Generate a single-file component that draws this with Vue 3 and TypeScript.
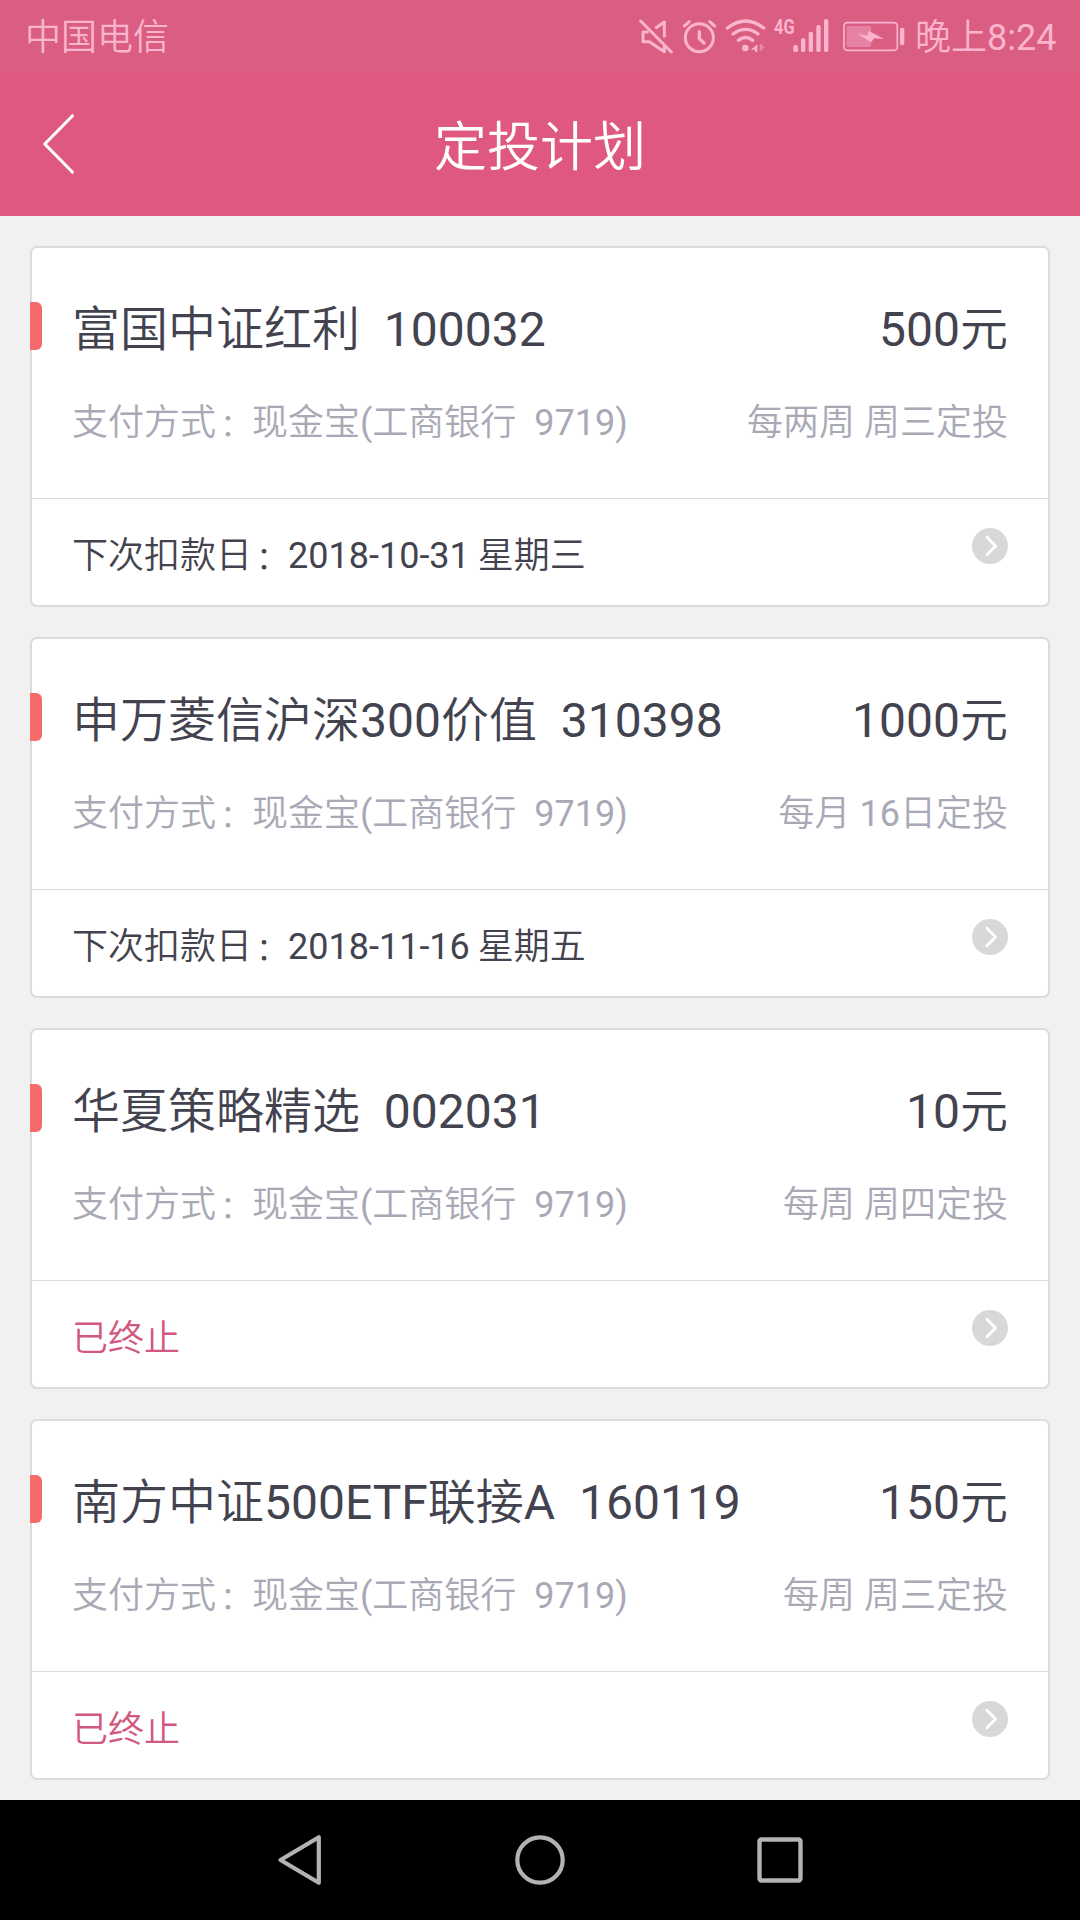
<script setup lang="ts">
interface Plan {
  name: string
  code: string
  amount: string
  cycle: string
  next?: string
}

const plans: Plan[] = [
  { name: '富国中证红利', code: '100032', amount: '500元', cycle: '每两周 周三定投', next: '2018-10-31 星期三' },
  { name: '申万菱信沪深300价值', code: '310398', amount: '1000元', cycle: '每月 16日定投', next: '2018-11-16 星期五' },
  { name: '华夏策略精选', code: '002031', amount: '10元', cycle: '每周 周四定投' },
  { name: '南方中证500ETF联接A', code: '160119', amount: '150元', cycle: '每周 周三定投' },
]
</script>

<template>
  <div class="screen">
    <div class="status">
      <span class="carrier">中国电信</span>
      <div class="icons">
        <svg class="mute" width="36" height="72" viewBox="54 0 108 216" fill="none" stroke="#fab4cd" stroke-width="9" stroke-linejoin="round">
          <path d="M62 63L154 156" stroke-linecap="round" />
          <path d="M86 96H69V125H88L133 155V137" />
          <path d="M106 85L133 66V112" />
        </svg>
        <svg class="alarm" width="36" height="72" viewBox="186 0 108 216" fill="none" stroke="#fab4cd" stroke-width="9" stroke-linecap="round" stroke-linejoin="round">
          <circle cx="238" cy="113" r="42" />
          <path d="M238 95V116L252 129" stroke-width="10" />
          <path d="M193 78L208 65M269 65L284 78" />
        </svg>
        <svg class="wifi" width="42" height="72" viewBox="314 0 126 216" fill="none" stroke="#fab4cd" stroke-width="10" stroke-linecap="round">
          <path d="M321 84Q376 42 430 84" />
          <path d="M338 102Q376 74 413 102" />
          <path d="M354 121Q376 104 397 121" />
          <circle cx="375" cy="144" r="10" fill="#fab4cd" stroke="none" />
          <path d="M411 133V156H404V149H392Z" fill="#fab4cd" stroke="none" />
          <path d="M418 133V156L435 140H426V133Z" fill="#e98aaa" stroke="none" />
        </svg>
        <span class="net">4G</span>
        <svg class="signal" width="36" height="72" viewBox="518 0 108 216" fill="#fab4cd">
          <rect x="519" y="135" width="14" height="21" rx="5" />
          <rect x="542" y="115" width="13" height="41" rx="5" />
          <rect x="565" y="95" width="13" height="61" rx="5" />
          <rect x="588" y="75" width="13" height="81" rx="5" />
          <rect x="611" y="57" width="13" height="99" rx="5" />
        </svg>
        <svg class="battery" width="62" height="72" viewBox="669 0 186 216" fill="none">
          <rect x="672" y="68" width="160" height="83" rx="10" stroke="#fab4cd" stroke-width="5" />
          <rect x="680" y="78" width="73" height="63" rx="4" fill="#e683a4" />
          <path d="M713 102L742 107L746 92L792 117L762 115L754 127Z" fill="#fab4cd" />
          <rect x="840" y="83" width="13" height="53" rx="6" fill="#fab4cd" />
        </svg>
        <span class="time">晚上8:24</span>
      </div>
    </div>

    <header class="header">
      <svg class="back" width="36" height="66" viewBox="0 0 36 66" fill="none" stroke="#fff" stroke-width="3.2" stroke-linecap="round" stroke-linejoin="round">
        <path d="M32.3 5L4.8 33L32.3 61" />
      </svg>
      <h1 class="title">定投计划</h1>
    </header>

    <main class="list">
      <section v-for="plan in plans" :key="plan.code" class="card">
        <div class="info">
          <div class="row main">
            <i class="mark"></i>
            <span class="name">{{ plan.name }}&nbsp; {{ plan.code }}</span>
            <span class="amount">{{ plan.amount }}</span>
          </div>
          <div class="row sub">
            <span>支付方式<span class="colon">：</span>现金宝(工商银行&nbsp; 9719)</span>
            <span>{{ plan.cycle }}</span>
          </div>
        </div>
        <div class="foot">
          <span v-if="plan.next" class="next">下次扣款日<span class="colon">：</span>{{ plan.next }}</span>
          <span v-else class="ended">已终止</span>
          <svg class="go" width="36" height="36" viewBox="0 0 36 36" fill="none">
            <circle cx="18" cy="18" r="18" fill="#d8d8d8" />
            <path d="M15 9.2L23.6 18L15 26.8" stroke="#fff" stroke-width="2.8" stroke-linecap="round" stroke-linejoin="round" />
          </svg>
        </div>
      </section>
    </main>

    <nav class="nav">
      <svg width="52" height="56" viewBox="0 0 52 56" fill="none" stroke="#b3b3b3" stroke-width="4.2" stroke-linejoin="round">
        <path d="M6.5 28L44.8 5.2V50.8Z" />
      </svg>
      <svg width="52" height="56" viewBox="0 0 52 56" fill="none" stroke="#b3b3b3" stroke-width="4.2">
        <circle cx="26" cy="28" r="22.7" />
      </svg>
      <svg width="52" height="56" viewBox="0 0 52 56" fill="none" stroke="#b3b3b3" stroke-width="4.4">
        <rect x="5.5" y="7.5" width="41" height="41" rx="2" />
      </svg>
    </nav>
  </div>
</template>

<style>
body {
  margin: 0;
}
</style>

<style scoped>
.screen {
  width: 1080px;
  height: 1920px;
  display: flex;
  flex-direction: column;
  background: #f1f1f1;
  font-family: Roboto, 'Noto Sans CJK SC DemiLight', 'Noto Sans CJK SC', sans-serif;
  overflow: hidden;
}
.status {
  height: 72px;
  flex: none;
  display: flex;
  justify-content: space-between;
  padding: 0 23px 0 25px;
  background: #da5d82;
  color: #fab4cd;
  font-size: 36px;
  line-height: 77px;
  white-space: nowrap;
}
.icons {
  display: flex;
}
.icons svg {
  flex: none;
  display: block;
}
.alarm { margin-left: 8px; }
.wifi { margin-left: 7px; }
.net {
  width: 19px;
  margin-left: 7px;
  font-size: 21px;
  font-weight: 700;
  line-height: 54px;
  transform: scaleX(0.78);
  transform-origin: 0 50%;
}
.battery { margin-left: 14px; }
.time {
  width: 142px;
  margin-left: 10px;
}
.header {
  height: 144px;
  flex: none;
  display: grid;
  grid-template-columns: 120px 1fr 120px;
  align-items: center;
  background: #df5880;
}
.back {
  margin-left: 40px;
}
.title {
  margin: 8px 0 0;
  text-align: center;
  color: #fff;
  font-size: 53px;
  font-weight: 400;
  line-height: 80px;
}
.list {
  flex: 1;
  display: flex;
  flex-direction: column;
  gap: 30px;
  padding: 30px 30px 0;
}
.card {
  height: 361px;
  flex: none;
  box-sizing: border-box;
  border: 2px solid #dbdbdb;
  border-radius: 7px;
  background: #fff;
}
.info {
  height: 251px;
  box-sizing: border-box;
  padding: 46px 40px 0 0;
  border-bottom: 1px solid #dbdbdb;
}
.row {
  display: flex;
  justify-content: space-between;
  white-space: nowrap;
}
.main {
  height: 72px;
  line-height: 71px;
  font-size: 48px;
  color: #43434f;
}
.mark {
  width: 12px;
  height: 48px;
  margin: 8px 30px 0 -2px;
  border-radius: 0 6px 6px 0;
  background: #f56a6a;
}
.name {
  flex: 1;
}
.sub {
  margin-top: 30px;
  padding-left: 40px;
  height: 54px;
  line-height: 54px;
  font-size: 36px;
  color: #a9a9b6;
}
.colon {
  display: inline-block;
  padding-left: 4px;
  font-size: 32px;
  line-height: 1;
  transform: translateY(1px);
}
.foot {
  height: 106px;
  display: flex;
  justify-content: space-between;
  padding: 0 40px;
  font-size: 36px;
  line-height: 114px;
  color: #43434f;
}
.next {
  word-spacing: -1px;
}
.ended {
  line-height: 116px;
  color: #d1587f;
}
.go {
  margin-top: 29px;
}
.nav {
  height: 120px;
  flex: none;
  display: flex;
  justify-content: center;
  align-items: center;
  gap: 188px;
  background: #000;
}
</style>
